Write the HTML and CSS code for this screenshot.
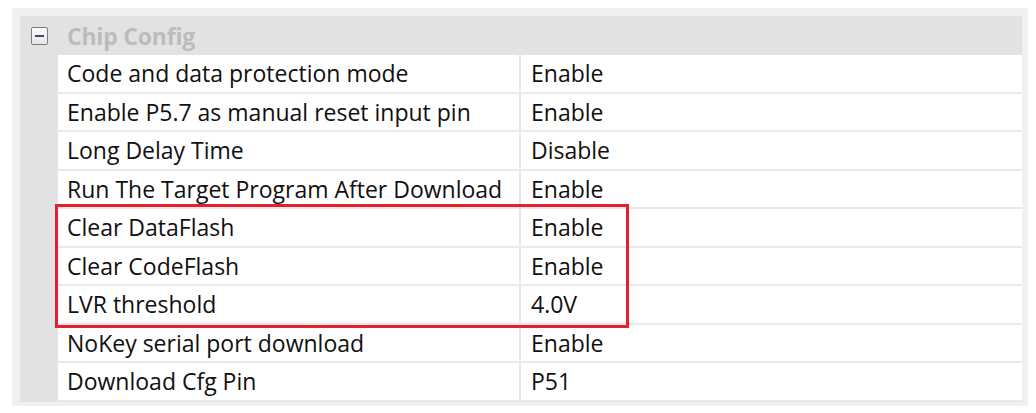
FILE: index.html
```html
<!DOCTYPE html>
<html>
<head>
<meta charset="utf-8">
<link rel="stylesheet" href="styles.css">
</head>
<body>
<div class="frame">
  <div class="panel">
    <div class="group-head">
      <span class="toggle"><span class="minus"></span></span>
      <span class="group-title">Chip Config</span>
    </div>
    <div class="rows">
      <div class="row"><div class="name">Code and data protection mode</div><div class="val">Enable</div></div>
      <div class="row"><div class="name">Enable P5.7 as manual reset input pin</div><div class="val">Enable</div></div>
      <div class="row"><div class="name">Long Delay Time</div><div class="val">Disable</div></div>
      <div class="row"><div class="name">Run The Target Program After Download</div><div class="val">Enable</div></div>
      <div class="row"><div class="name">Clear DataFlash</div><div class="val">Enable</div></div>
      <div class="row"><div class="name">Clear CodeFlash</div><div class="val">Enable</div></div>
      <div class="row"><div class="name">LVR threshold</div><div class="val">4.0V</div></div>
      <div class="row"><div class="name">NoKey serial port download</div><div class="val">Enable</div></div>
      <div class="row"><div class="name">Download Cfg Pin</div><div class="val">P51</div></div>
    </div>
    <div class="highlight"></div>
  </div>
</div>
</body>
</html>
```

FILE: styles.css
```css
html, body {
  margin: 0;
  padding: 0;
  background: #ffffff;
}
body {
  font-family: "Open Sans", "Noto Sans", sans-serif;
  color: #101010;
}
.frame {
  margin: 8px 0 0 12px;
  width: 1016px;
  height: 398px;
  box-sizing: border-box;
  background: #f0f0f0;
  padding: 8px 6px 0 8px;
}
.panel {
  position: relative;
  background: #e2e2e2;
  width: 1002px;
}
.group-head {
  height: 39px;
  display: flex;
  align-items: center;
}
.toggle {
  margin-left: 11px;
  width: 15px;
  height: 16px;
  border: 1px solid #7d7d7d;
  border-radius: 2px;
  background: linear-gradient(#fbfbfb, #e6e6e6);
  display: flex;
  align-items: center;
  justify-content: center;
}
.minus {
  width: 9px;
  height: 2px;
  background: #3c4a6a;
}
.group-title {
  margin-left: 19px;
  font-size: 23px;
  font-weight: 700;
  color: #bcbcbc;
  letter-spacing: -0.2px;
}
.rows {
  margin-left: 38px;
  background: #ffffff;
}
.row {
  height: 38.5px;
  box-sizing: border-box;
  display: flex;
  align-items: center;
  border-bottom: 2px solid #e9e9e9;
  font-size: 23px;
}
.name {
  width: 463px;
  height: 100%;
  box-sizing: border-box;
  padding-left: 9px;
  display: flex;
  align-items: center;
  border-right: 2px solid #e6e6e6;
  white-space: nowrap;
}
.val {
  padding-left: 10px;
}
.highlight {
  position: absolute;
  left: 35px;
  top: 188px;
  width: 574px;
  height: 124px;
  box-sizing: border-box;
  border: 3px solid #e3202c;
}
```
